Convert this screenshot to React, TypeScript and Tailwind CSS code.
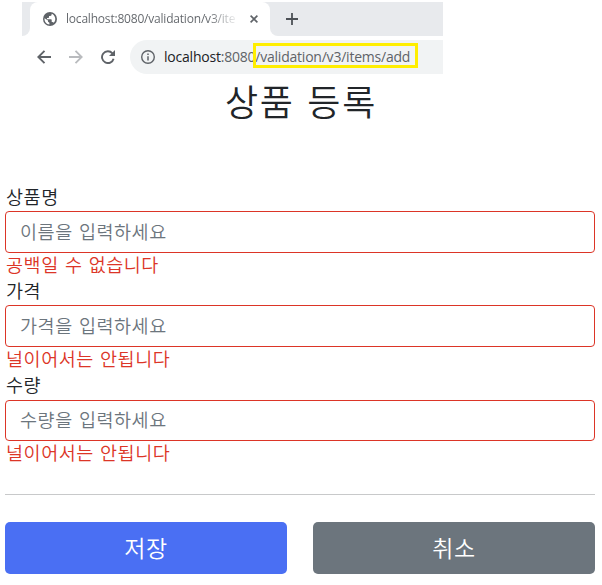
import type { ReactNode } from "react";

function BrowserBar() {
  return (
    <div className="mt-[2px] ml-[22px] h-[78px] w-[421px] font-['Open_Sans','Noto_Sans',sans-serif] font-normal">
      <div className="flex h-[34px] bg-[#e8eaed]">
        <div className="flex w-2 items-end bg-white">
          <div className="h-full w-full rounded-br-lg bg-[#e8eaed]" />
        </div>
        <div className="flex w-[240px] items-center rounded-t-lg bg-white pl-[13px]">
          <svg width="14" height="14" viewBox="0 0 14 14" className="shrink-0">
            <circle cx="7" cy="7" r="7" fill="#5f6368" />
            <path d="M1.6 6.3 5 8.4v1.4l1.4 1v1.6C3.700 12.300 1.500 10 1.500 7Z" fill="#fff" />
            <path d="M8.600 1.800v.9c0 .7-.6 1.200-1.300 1.200H6v1.300c0 .4-.3.700-.7.700H4v1.300h4c.4 0 .7.300.7.700v2h.7c.6 0 1.100.4 1.300.9A5.500 5.500 0 0 0 8.600 1.800Z" fill="#fff" />
          </svg>
          <div className="ml-[9px] w-[173px] bg-linear-to-r from-[#5f6368] from-82% to-transparent bg-clip-text text-[12px] leading-5 tracking-[-0.2px] whitespace-nowrap text-transparent">
            localhost:8080/validation/v3/ite
          </div>
          <svg width="8" height="8" viewBox="0 0 8 8" className="ml-[11px] shrink-0" stroke="#5f6368" strokeWidth="1.6">
            <path d="M.6.6 7.400 7.400M7.400.6.6 7.400" />
          </svg>
        </div>
        <div className="flex flex-1 bg-white">
          <div className="flex flex-1 items-center rounded-bl-lg bg-[#e8eaed] pl-4">
            <svg width="12" height="12" viewBox="0 0 12 12" stroke="#4d5156" strokeWidth="1.8">
              <path d="M6 0v12M0 6h12" />
            </svg>
          </div>
        </div>
      </div>
      <div className="flex h-[42px] items-center">
        <svg width="14" height="14" viewBox="0 0 14 14" fill="none" stroke="#5f6368" strokeWidth="1.9" className="ml-[15px]">
          <path d="M14 7H1.500M7.500.8 1.300 7l6.200 6.200" />
        </svg>
        <svg width="14" height="14" viewBox="0 0 14 14" fill="none" stroke="#b9bbbe" strokeWidth="1.800" className="ml-[18px]">
          <path d="M0 7h12.500M6.500.8 12.700 7l-6.200 6.200" />
        </svg>
        <svg width="14" height="14" viewBox="0 0 14 14" className="ml-[18px]">
          <path d="M11.400 3.300A5.900 5.900 0 1 0 12.600 8.700" fill="none" stroke="#5f6368" strokeWidth="1.900" />
          <path d="M14 0v6H8Z" fill="#5f6368" />
        </svg>
        <div className="ml-[15px] flex h-[34px] flex-1 items-center rounded-l-full bg-[#f1f3f4] pl-[11px]">
          <svg width="14" height="14" viewBox="0 0 14 14" fill="none" stroke="#5f6368" className="shrink-0">
            <circle cx="7" cy="7" r="6.300" strokeWidth="1.400" />
            <path d="M7 6.200v4.300M7 3.400v1.500" strokeWidth="1.500" />
          </svg>
          <div className="relative ml-[9px] text-[14px] leading-5 tracking-[-0.22px] whitespace-nowrap text-[#5f6368]">
            <span className="text-[#202124]">localhost</span>:8080/validation/v3/items/add
            <div className="absolute -top-[4px] left-[89px] h-[25px] w-[165px] border-3 border-[#ffee00]" />
          </div>
        </div>
      </div>
    </div>
  );
}

interface FieldProps {
  label: string;
  placeholder: string;
  error: string;
  last?: boolean;
}

function Field({ label, placeholder, error, last = false }: FieldProps) {
  return (
    <div className="text-[18.5px] leading-[23px] tracking-[0.55px] [word-spacing:1.5px]">
      <label className={`block pl-px ${last ? "h-[27px]" : "h-[26px]"}`}>{label}</label>
      <input
        className={`block w-full rounded-[4px] border border-[#dc3527] px-[14px] pb-[3px] tracking-[0.55px] outline-none [word-spacing:1.5px] placeholder:text-[#6c757d] ${last ? "h-[41px]" : "h-[42px]"}`}
        placeholder={placeholder}
      />
      <div className="h-[26px] pl-px text-[#dc3527]">{error}</div>
    </div>
  );
}

function Button({ className, children }: { className: string; children: ReactNode }) {
  return (
    <button className={`h-[52px] flex-1 rounded-[5px] pb-[3px] text-[23px] leading-8 tracking-[0.5px] text-white ${className}`}>
      {children}
    </button>
  );
}

export default function App() {
  return (
    <div className="flex h-[585px] w-[602px] flex-col overflow-hidden bg-white font-['Noto_Sans_CJK_KR',sans-serif] font-[350] text-[#212529]">
      <BrowserBar />
      <h1 className="h-[44px] text-center text-[36px] leading-[40px] font-[350] tracking-[1.7px] [word-spacing:3px]">
        상품 등록
      </h1>
      <form className="mt-[61px] flex flex-col pr-[7px] pl-[5px]">
        <Field label="상품명" placeholder="이름을 입력하세요" error="공백일 수 없습니다" />
        <Field label="가격" placeholder="가격을 입력하세요" error="널이어서는 안됩니다" />
        <Field label="수량" placeholder="수량을 입력하세요" error="널이어서는 안됩니다" last />
        <hr className="mt-[27px] border-[#c8c9ca]" />
        <div className="mt-[27px] flex gap-[26px]">
          <Button className="bg-[#4a6ff3]">저장</Button>
          <Button className="bg-[#6c757d]">취소</Button>
        </div>
      </form>
    </div>
  );
}
